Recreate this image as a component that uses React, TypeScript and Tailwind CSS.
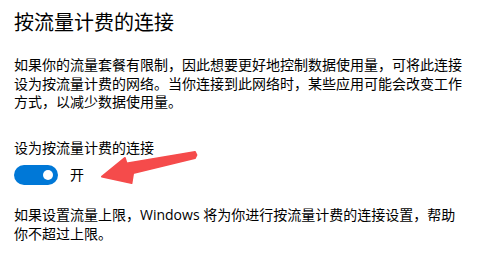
export default function App() {
  return (
    <div
      className="relative h-[256px] w-[491px] overflow-hidden bg-white pl-[14px] pt-[9px] text-black"
      style={{ fontFamily: '"Open Sans", "Noto Sans CJK SC", sans-serif' }}
    >
      <h1 className="text-[20px] font-normal leading-[28px]">按流量计费的连接</h1>

      <p className="mt-[19px] w-[452px] text-[14px] leading-[18.5px]">
        如果你的流量套餐有限制，因此想要更好地控制数据使用量，可将此连接设为按流量计费的网络。当你连接到此网络时，某些应用可能会改变工作方式，以减少数据使用量。
      </p>

      <div className="mt-[26px] text-[14px] leading-[19px]">设为按流量计费的连接</div>

      <div className="mt-[8.5px] flex items-center gap-[12px]">
        <div className="flex h-[20px] w-[44px] items-center justify-end rounded-full bg-[#0078d7] pr-[5px]">
          <div className="h-[10px] w-[10px] rounded-full bg-white" />
        </div>
        <span className="text-[14px] leading-[20px]">开</span>
      </div>

      <p className="mt-[21px] w-[452px] text-[14px] leading-[18.5px]">
        如果设置流量上限，Windows 将为你进行按流量计费的连接设置，帮助你不超过上限。
      </p>

      <svg
        className="pointer-events-none absolute left-0 top-0"
        width="491"
        height="256"
        viewBox="0 0 491 256"
      >
        <polygon
          points="101.7,176.7 125,157.7 126.7,163.3 195,151.7 196.7,155 195,158.3 133.3,173.3 131.7,183.3"
          fill="#f54b4b"
          stroke="#f54b4b"
          strokeWidth="1.5"
          strokeLinejoin="round"
        />
      </svg>
    </div>
  );
}
